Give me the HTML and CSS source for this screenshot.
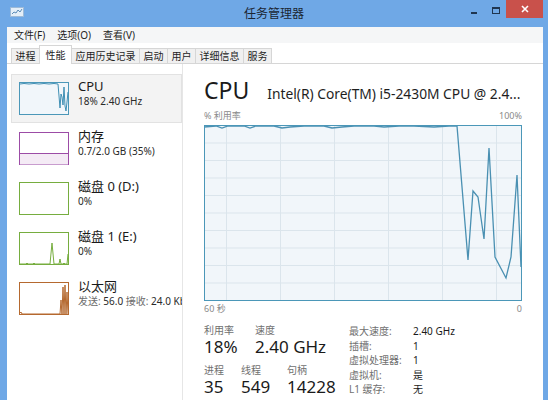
FILE: index.html
```html
<!DOCTYPE html>
<html lang="zh-CN">
<head>
    <meta charset="UTF-8">
    <title>任务管理器</title>
    <link rel="stylesheet" href="styles.css">
</head>
<body>
    <div class="window">
        <div class="titlebar">
            <div class="app-icon">
                <svg width="14" height="11" viewBox="0 0 14 11">
                    <rect x="0.5" y="0.5" width="13" height="9" fill="#e4eef8" stroke="#9dbad8"/>
                    <polyline points="2,7 4,5 6,6 8,3 10,5 12,2" fill="none" stroke="#5c8db8" stroke-width="1"/>
                </svg>
            </div>
            <div class="title">任务管理器</div>
            <div class="controls">
                <div class="ctl-min"></div>
                <div class="ctl-max"></div>
                <div class="ctl-close">
                    <svg width="8" height="8" viewBox="0 0 8 8">
                        <path d="M1 1 L7 7 M7 1 L1 7" stroke="#fff" stroke-width="1.6"/>
                    </svg>
                </div>
            </div>
        </div>

        <div class="client">
            <div class="menubar">
                <span class="menu-item">文件(F)</span>
                <span class="menu-item">选项(O)</span>
                <span class="menu-item">查看(V)</span>
            </div>

            <div class="tabs">
                <div class="tab">进程</div>
                <div class="tab active">性能</div>
                <div class="tab">应用历史记录</div>
                <div class="tab">启动</div>
                <div class="tab">用户</div>
                <div class="tab">详细信息</div>
                <div class="tab">服务</div>
            </div>

            <div class="content">
                <div class="sidebar">
                    <div class="item selected">
                        <svg class="thumb" width="50" height="33" viewBox="0 0 50 33">
                            <rect x="0.5" y="0.5" width="49" height="32" fill="#f1f6fa" stroke="#4b97b8"/>
                            <polyline points="1,2 5,1.5 10,2 15,1.5 20,2 25,1.5 30,2 35,1.5 39,2 41,26 42,12 43,15 44,23 45,5 46,24 47,29 48,20 49,10" fill="none" stroke="#3f8fb4" stroke-width="1"/>
                        </svg>
                        <div class="item-text">
                            <div class="item-name">CPU</div>
                            <div class="item-sub">18% 2.40 GHz</div>
                        </div>
                    </div>

                    <div class="item">
                        <svg class="thumb" width="50" height="33" viewBox="0 0 50 33">
                            <rect x="0.5" y="0.5" width="49" height="32" fill="#fff" stroke="#9c4ca6"/>
                            <rect x="1" y="21.5" width="48" height="11" fill="#f4ebf5"/>
                            <line x1="1" y1="21.5" x2="49" y2="21.5" stroke="#9c4ca6" stroke-width="1"/>
                        </svg>
                        <div class="item-text">
                            <div class="item-name">内存</div>
                            <div class="item-sub">0.7/2.0 GB (35%)</div>
                        </div>
                    </div>

                    <div class="item">
                        <svg class="thumb" width="50" height="33" viewBox="0 0 50 33">
                            <rect x="0.5" y="0.5" width="49" height="32" fill="#fff" stroke="#76ad3f"/>
                        </svg>
                        <div class="item-text">
                            <div class="item-name">磁盘 0 (D:)</div>
                            <div class="item-sub">0%</div>
                        </div>
                    </div>

                    <div class="item">
                        <svg class="thumb" width="50" height="33" viewBox="0 0 50 33">
                            <rect x="0.5" y="0.5" width="49" height="32" fill="#fff" stroke="#76ad3f"/>
                            <polyline points="1,32 7,32 8,31 9,32 14,32 15,31 16,32 31,32 33,11 35,32 40,32 41,27 42,32 44,32 45,31 46,32 48,32 49,22" fill="none" stroke="#76ad3f" stroke-width="1"/>
                        </svg>
                        <div class="item-text">
                            <div class="item-name">磁盘 1 (E:)</div>
                            <div class="item-sub">0%</div>
                        </div>
                    </div>

                    <div class="item">
                        <svg class="thumb" width="50" height="33" viewBox="0 0 50 33">
                            <rect x="0.5" y="0.5" width="49" height="32" fill="#fff" stroke="#b5692f"/>
                            <polyline points="1,31 2,30 3,32 41,32 42,18 43,32 44,5 45,32 46,3 47,32 48,10 49,32" fill="none" stroke="#b5692f" stroke-width="1"/>
                        </svg>
                        <div class="item-text">
                            <div class="item-name">以太网</div>
                            <div class="item-sub"><span class="muted">发送:</span> 56.0 <span class="muted">接收:</span> 24.0 Kbps</div>
                        </div>
                    </div>
                </div>

                <div class="detail">
                    <div class="detail-head">
                        <span class="detail-title">CPU</span>
                        <span class="detail-model">Intel(R) Core(TM) i5-2430M CPU @ 2.4...</span>
                    </div>

                    <div class="axis-row">
                        <span>% 利用率</span>
                        <span>100%</span>
                    </div>

                    <svg class="graph" width="318" height="176" viewBox="0 0 318 176">
                        <rect x="0.5" y="0.5" width="317" height="175" fill="#f1f6fa"/>
                        <g stroke="#dbe5ec" stroke-width="1">
                            <line x1="22.5" y1="0" x2="22.5" y2="176"/>
                            <line x1="76.5" y1="0" x2="76.5" y2="176"/>
                            <line x1="130.5" y1="0" x2="130.5" y2="176"/>
                            <line x1="184.5" y1="0" x2="184.5" y2="176"/>
                            <line x1="238.5" y1="0" x2="238.5" y2="176"/>
                            <line x1="292.5" y1="0" x2="292.5" y2="176"/>
                            <line x1="0" y1="18" x2="318" y2="18"/>
                            <line x1="0" y1="35.5" x2="318" y2="35.5"/>
                            <line x1="0" y1="53" x2="318" y2="53"/>
                            <line x1="0" y1="70.5" x2="318" y2="70.5"/>
                            <line x1="0" y1="88" x2="318" y2="88"/>
                            <line x1="0" y1="105.5" x2="318" y2="105.5"/>
                            <line x1="0" y1="123" x2="318" y2="123"/>
                            <line x1="0" y1="140.5" x2="318" y2="140.5"/>
                            <line x1="0" y1="158" x2="318" y2="158"/>
                        </g>
                        <polyline points="0,2 12,1 18,3 24,1 40,1 46,3 52,1 70,1 78,3 86,2 100,1 120,1 128,3 138,2 150,1 170,1 180,2 195,1 210,1 230,2 245,1 253,1 264,135 269,66 274,72 280,114 285,23 291,132 302,153 307,132 313,50 317,142" fill="none" stroke="#4a90b2" stroke-width="1.3"/>
                        <rect x="0.5" y="0.5" width="317" height="175" fill="none" stroke="#4b97b8"/>
                    </svg>

                    <div class="axis-row bottom">
                        <span>60 秒</span>
                        <span>0</span>
                    </div>

                    <div class="stats">
                        <div class="stats-left">
                            <div class="stat-row">
                                <div class="stat w51">
                                    <div class="stat-label">利用率</div>
                                    <div class="stat-value">18%</div>
                                </div>
                                <div class="stat">
                                    <div class="stat-label">速度</div>
                                    <div class="stat-value">2.40 GHz</div>
                                </div>
                            </div>
                            <div class="stat-row second">
                                <div class="stat w37">
                                    <div class="stat-label">进程</div>
                                    <div class="stat-value">35</div>
                                </div>
                                <div class="stat w46">
                                    <div class="stat-label">线程</div>
                                    <div class="stat-value">549</div>
                                </div>
                                <div class="stat">
                                    <div class="stat-label">句柄</div>
                                    <div class="stat-value">14228</div>
                                </div>
                            </div>
                        </div>

                        <div class="stats-right">
                            <span class="spec-label">最大速度:</span><span class="spec-value">2.40 GHz</span>
                            <span class="spec-label">插槽:</span><span class="spec-value">1</span>
                            <span class="spec-label">虚拟处理器:</span><span class="spec-value">1</span>
                            <span class="spec-label">虚拟机:</span><span class="spec-value">是</span>
                            <span class="spec-label">L1 缓存:</span><span class="spec-value">无</span>
                        </div>
                    </div>
                </div>
            </div>
        </div>
    </div>
</body>
</html>
```

FILE: styles.css
```css
* {
    box-sizing: border-box;
    margin: 0;
    padding: 0;
}

body {
    width: 548px;
    height: 400px;
    overflow: hidden;
    background-color: #6fa8e6;
    font-family: "Noto Sans", "Noto Sans CJK SC", sans-serif;
    color: #1e1e1e;
}

.window {
    display: flex;
    flex-direction: column;
    height: 400px;
}

/* 标题栏 */
.titlebar {
    height: 27px;
    flex: none;
    display: grid;
    grid-template-columns: 1fr auto 1fr;
}

.app-icon {
    margin: 7px 0 0 10px;
}

.app-icon svg {
    display: block;
}

.title {
    font-size: 12px;
    line-height: 27px;
    color: #1b2633;
}

.controls {
    justify-self: end;
    display: flex;
    align-items: flex-start;
}

.ctl-min {
    width: 6px;
    height: 2px;
    margin-top: 12px;
    background-color: #1f3550;
}

.ctl-max {
    width: 8px;
    height: 7px;
    margin: 7px 0 0 15px;
    border: 1px solid #1f3550;
    border-top-width: 2px;
}

.ctl-close {
    width: 37px;
    height: 18px;
    margin: 0 5px 0 6px;
    background-color: #c9514b;
    display: flex;
    align-items: center;
    justify-content: center;
}

/* 窗口内容 */
.client {
    flex: 1;
    min-height: 0;
    margin: 0 5px 0 7px;
    background-color: #fff;
    display: flex;
    flex-direction: column;
}

.menubar {
    height: 16px;
    flex: none;
    display: flex;
    padding-left: 1px;
    background-color: #f5f6f7;
    font-size: 10px;
    line-height: 16px;
    color: #1e1e1e;
}

.menu-item {
    padding: 0 6px;
}

.tabs {
    height: 21px;
    flex: none;
    display: flex;
    align-items: flex-end;
    padding-left: 4px;
    border-bottom: 1px solid #d6d6d6;
}

.tab {
    font-size: 10px;
    line-height: 14px;
    padding: 0 3.5px;
    border: 1px solid #d6d6d6;
    border-bottom: none;
    background-color: #f0f0f0;
    color: #1e1e1e;
}

.tab + .tab {
    margin-left: -1px;
}

.tab.active {
    background-color: #fff;
    line-height: 18px;
    padding: 0 5.5px;
    margin-bottom: -1px;
    position: relative;
}

.content {
    flex: 1;
    min-height: 0;
    display: flex;
}

/* 左侧列表 */
.sidebar {
    width: 176px;
    flex: none;
    padding-top: 10px;
    border-right: 1px solid #e6e6e6;
    overflow: hidden;
}

.item {
    height: 50px;
    margin-left: 4px;
    padding: 7px 0 0 7px;
    border: 1px solid transparent;
    display: flex;
    align-items: flex-start;
}

.item.selected {
    background-color: #f3f3f3;
    border-color: #e2e2e2;
    height: 49px;
    margin-bottom: 1px;
}

.thumb {
    flex: none;
    display: block;
}

.item-text {
    margin: -3px 0 0 9px;
    white-space: nowrap;
}

.item-name {
    font-size: 13px;
    line-height: 15px;
    color: #1a1a1a;
}

.item-sub {
    font-size: 10px;
    line-height: 14px;
    color: #2a2a2a;
}

.muted {
    color: #6d6d6d;
}

/* 右侧详情 */
.detail {
    flex: 1;
    min-width: 0;
    padding: 12px 20px 0 21px;
}

.detail-head {
    display: flex;
    align-items: baseline;
    white-space: nowrap;
}

.detail-title {
    font-size: 23px;
    line-height: 28px;
    color: #1a1a1a;
}

.detail-model {
    margin-left: 18px;
    font-size: 13.8px;
    color: #1e1e1e;
}

.axis-row {
    width: 318px;
    display: flex;
    justify-content: space-between;
    margin-top: 6px;
    font-size: 9px;
    line-height: 12px;
    color: #8a8a8a;
}

.axis-row.bottom {
    margin-top: 2px;
}

.graph {
    display: block;
    margin-top: 3px;
}

.stats {
    display: flex;
    margin-top: 9px;
}

.stats-left {
    width: 145px;
    flex: none;
}

.stat-row {
    display: flex;
}

.stat-row.second {
    margin-top: 8px;
}

.w51 { width: 51px; }
.w37 { width: 37px; }
.w46 { width: 46px; }

.stat-label {
    font-size: 10px;
    line-height: 13px;
    color: #707070;
}

.stat-value {
    font-size: 17px;
    line-height: 19px;
    color: #1a1a1a;
}

.stats-right {
    display: grid;
    grid-template-columns: 64px auto;
    font-size: 10px;
    line-height: 14.6px;
}

.spec-label {
    color: #707070;
}

.spec-value {
    color: #1a1a1a;
}
```
